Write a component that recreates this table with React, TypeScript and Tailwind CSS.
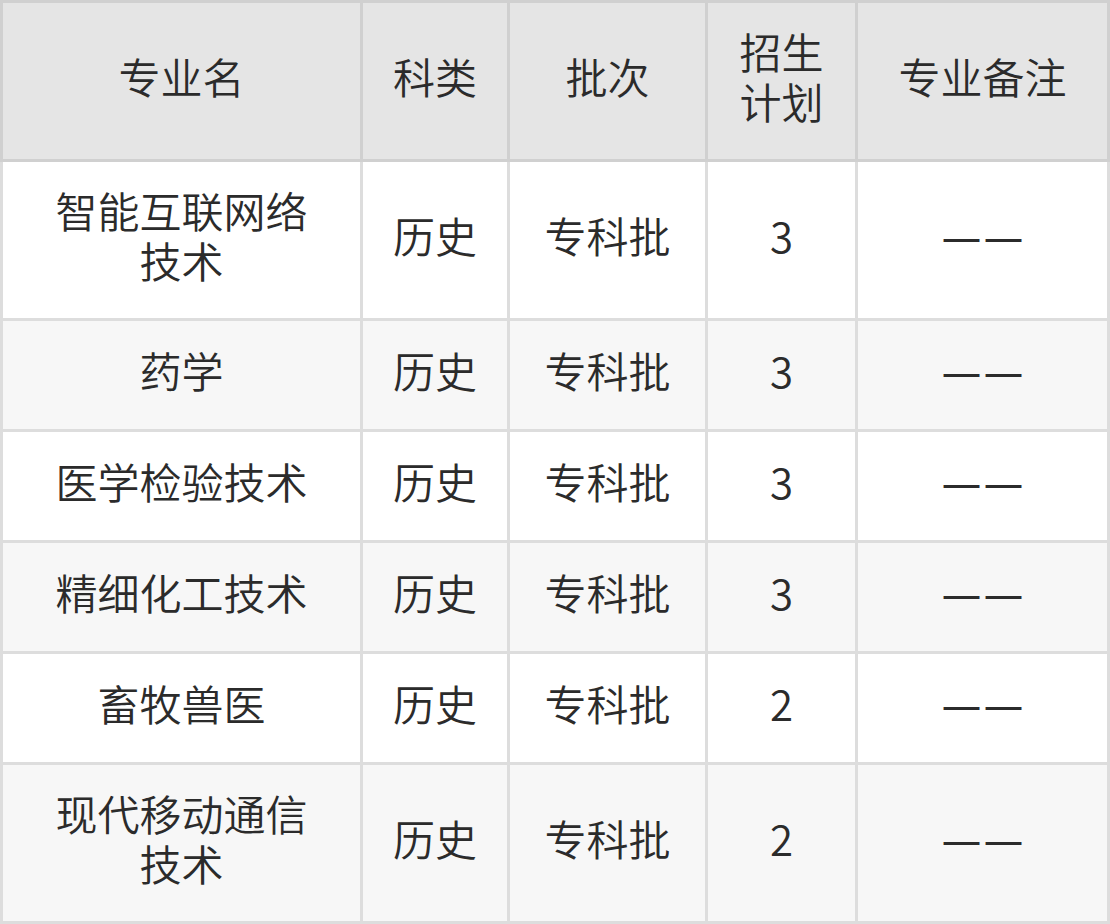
import React from "react";

const font = { fontFamily: '"Noto Sans CJK SC", "Noto Sans", sans-serif' };
const latin = { fontFamily: '"Noto Sans", sans-serif' };

const rows: { name: React.ReactNode; tall: boolean; n: string }[] = [
  { name: <>智能互联网络<br />技术</>, tall: true, n: "3" },
  { name: "药学", tall: false, n: "3" },
  { name: "医学检验技术", tall: false, n: "3" },
  { name: "精细化工技术", tall: false, n: "3" },
  { name: "畜牧兽医", tall: false, n: "2" },
  { name: <>现代移动通信<br />技术</>, tall: true, n: "2" },
];

const cols = "grid grid-cols-[357px_144px_195px_147px_249px] gap-[3px]";

const Dash = () => (
  <span className="inline-flex gap-[3px] text-[39px] font-normal" style={latin}>
    <span>—</span>
    <span>—</span>
  </span>
);

export default function App() {
  return (
    <div className="w-[1110px] h-[924px] text-[42px] leading-[50px] font-[350] text-[#2b2b2b]" style={font}>
      <div className={`${cols} bg-[#d0d0d0] p-[3px]`}>
        {["专业名", "科类", "批次", <>招生<br />计划</>, "专业备注"].map((h, i) => (
          <div key={i} className="h-[156px] bg-[#e5e5e5] flex items-center justify-center text-center pb-[10px]">
            <div>{h}</div>
          </div>
        ))}
      </div>
      <div className={`${cols} bg-[#dddddd] px-[3px] pb-[3px]`}>
        {rows.map((r, ri) => {
          const bg = ri % 2 === 0 ? "bg-white" : "bg-[#f7f7f7]";
          const h = r.tall ? "h-[156px]" : "h-[108px]";
          return [r.name, "历史", "专科批", r.n, <Dash />].map((c, ci) => (
            <div key={`${ri}-${ci}`} className={`${h} ${bg} flex items-center justify-center text-center pb-[11px]`}>
              <div>{c}</div>
            </div>
          ));
        })}
      </div>
    </div>
  );
}
